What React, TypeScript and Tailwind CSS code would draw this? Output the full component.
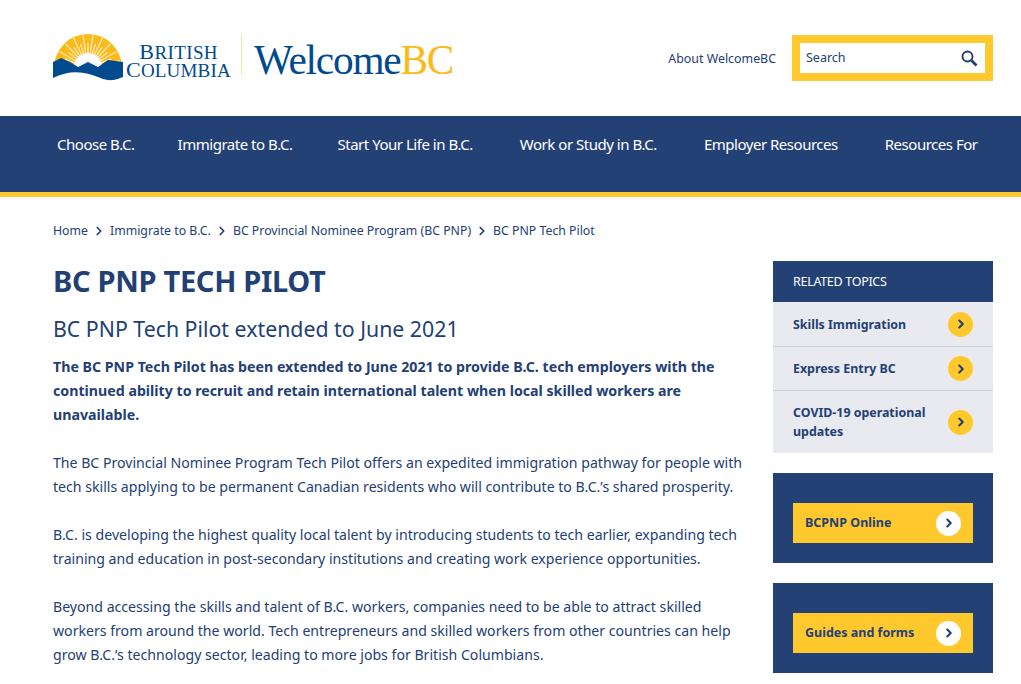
import { ChevronRight } from 'lucide-react';

const NAV_ITEMS = [
  { label: 'Choose B.C.', className: '' },
  { label: 'Immigrate to B.C.', className: 'ml-[43px]' },
  { label: 'Start Your Life in B.C.', className: 'ml-[45px]' },
  { label: 'Work or Study in B.C.', className: 'ml-[47px]' },
  { label: 'Employer Resources', className: 'ml-[47px]' },
  { label: 'Resources For', className: 'ml-[47px]' },
];
const CRUMBS = ['Home', 'Immigrate to B.C.', 'BC Provincial Nominee Program (BC PNP)', 'BC PNP Tech Pilot'];
const RAYS = Array.from({ length: 21 }, (_, i) => (Math.PI * (i + 0.5)) / 21);

function Logo() {
  return (
    <svg width="72" height="48" viewBox="0 0 72 48" className="shrink-0">
      <path d="M1 34 A34 34 0 0 1 69 34 Z" fill="#fcba19" />
      {RAYS.map((a, i) => (
        <line key={i} x1={35 - Math.cos(a) * 12} y1={34 - Math.sin(a) * 12} x2={35 - Math.cos(a) * (i % 2 ? 33 : 25)} y2={34 - Math.sin(a) * (i % 2 ? 33 : 25)} stroke="#fff" strokeWidth="1.3" opacity="0.7" />
      ))}
      <circle cx="35" cy="33" r="14" fill="#fff" />
      <path d="M0 28 L8 24 L17 28 L25 33 L35 28 L45 33 L55 26 L70 28 L70 43 C67 44 64 45.5 60 46 C52 47 46 43 36 40 C24 37 12 38 0 44 Z" fill="#004a8f" />
    </svg>
  );
}

function SearchIcon() {
  return (
    <svg width="17" height="17" viewBox="0 0 17 17" fill="none" stroke="#234075">
      <circle cx="6.5" cy="6.5" r="5" strokeWidth="1.9" />
      <line x1="10.5" y1="10.5" x2="15.5" y2="15.5" strokeWidth="2.8" />
    </svg>
  );
}

function Arrow({ white }: { white?: boolean }) {
  return (
    <span className={`flex h-[25px] w-[25px] shrink-0 items-center justify-center rounded-full ${white ? 'bg-white' : 'bg-[#ffc92e]'}`}>
      <ChevronRight size={14} strokeWidth={3.6} className="text-[#234075]" />
    </span>
  );
}

function TopicRow({ label, className }: { label: string; className: string }) {
  return (
    <div className={`flex items-center justify-between border-b border-[#d0d1dc] pl-5 pr-5 text-[12.4px] font-bold leading-[19px] last:border-b-0 ${className}`}>
      <span className="w-[150px]">{label}</span>
      <Arrow />
    </div>
  );
}

function ButtonCard({ label }: { label: string }) {
  return (
    <div className="bg-[#244176] px-5 pb-5 pt-[30px]">
      <div className="flex h-10 items-center justify-between bg-[#ffc92e] pl-3 pr-3 text-[12.5px] font-bold">
        <span>{label}</span>
        <Arrow white />
      </div>
    </div>
  );
}

export default function App() {
  return (
    <div className="h-[684px] overflow-hidden bg-white font-['Noto_Sans',sans-serif] text-[#234075]">
      <header className="flex h-[116px] items-center justify-between pl-[53px] pr-[28px]">
        <div className="flex items-center">
          <Logo />
          <div className="ml-[1px] mt-[6px] w-[104px] whitespace-nowrap text-right font-['Liberation_Serif',serif] text-[#004a8f]">
            <div className="pr-[12px] text-[19px] leading-[17px] tracking-[0.4px]"><span className="text-[22px]">B</span>RITISH</div>
            <div className="text-[19px] leading-[17px] tracking-[0.2px]"><span className="text-[22px]">C</span>OLUMBIA</div>
          </div>
          <div className="mb-[7px] ml-[11px] h-[41px] w-px bg-[#fbe3a6]" />
          <div className="ml-[12px] mt-[5px] font-['Liberation_Serif',serif] text-[41.3px] leading-none tracking-[-1.2px] text-[#004a8f]">
            Welcome<span className="text-[#fcba19]">BC</span>
          </div>
        </div>
        <div className="flex items-center gap-4">
          <span className="mt-[2px] text-[12.4px]">About WelcomeBC</span>
          <div className="flex h-[46px] w-[201px] items-center justify-between border-[8px] border-[#ffc92e] pl-[6px] pr-[7px]">
            <span className="mt-px text-[12.5px]">Search</span>
            <SearchIcon />
          </div>
        </div>
      </header>

      <nav className="flex h-[81px] items-start border-b-[5px] border-[#ffc92e] bg-[#244176] pl-[57px] pt-[18px] text-[15px] leading-[21px] tracking-[-0.48px] text-white">
        {NAV_ITEMS.map((item) => (
          <span key={item.label} className={`whitespace-nowrap ${item.className}`}>{item.label}</span>
        ))}
      </nav>

      <div className="flex gap-7 pl-[53px] pr-7">
        <main className="w-[692px] shrink-0">
          <div className="mt-[25px] flex h-[18px] items-center text-[12.3px]">
            {CRUMBS.map((crumb, i) => (
              <span key={crumb} className="flex items-center whitespace-nowrap">
                {i > 0 && <ChevronRight size={14} strokeWidth={3} className="mx-[4px]" />}
                {crumb}
              </span>
            ))}
          </div>
          <h1 className="mt-[21px] text-[29px] font-bold leading-[40px] tracking-[-0.3px]">BC PNP TECH PILOT</h1>
          <h2 className="mt-[13px] text-[21.3px] leading-[30px]">BC PNP Tech Pilot extended to June 2021</h2>
          <p className="mt-[11px] text-[14.2px] font-bold leading-[24px]">
            The BC PNP Tech Pilot has been extended to June 2021 to provide B.C. tech employers with the continued ability to recruit and retain international talent when local skilled workers are unavailable.
          </p>
          <p className="mt-[24px] text-[14.12px] leading-[24px]">
            The BC Provincial Nominee Program Tech Pilot offers an expedited immigration pathway for people with tech skills applying to be permanent Canadian residents who will contribute to B.C.’s shared prosperity.
          </p>
          <p className="mt-[24px] text-[14.12px] leading-[24px]">
            B.C. is developing the highest quality local talent by introducing students to tech earlier, expanding tech training and education in post-secondary institutions and creating work experience opportunities.
          </p>
          <p className="mt-[24px] text-[14.12px] leading-[24px]">
            Beyond accessing the skills and talent of B.C. workers, companies need to be able to attract skilled workers from around the world. Tech entrepreneurs and skilled workers from other countries can help grow B.C.’s technology sector, leading to more jobs for British Columbians.
          </p>
        </main>

        <aside className="mt-[64px] w-[220px] shrink-0">
          <div className="flex h-[41px] items-center bg-[#244176] pl-5 pt-[2px] text-[12.5px] tracking-[-0.3px] text-white">RELATED TOPICS</div>
          <div className="bg-[#e9eaef]">
            <TopicRow label="Skills Immigration" className="h-[45px]" />
            <TopicRow label="Express Entry BC" className="h-[44px]" />
            <TopicRow label="COVID-19 operational updates" className="h-[62px]" />
          </div>
          <div className="mt-5 flex flex-col gap-5">
            <ButtonCard label="BCPNP Online" />
            <ButtonCard label="Guides and forms" />
          </div>
        </aside>
      </div>
    </div>
  );
}
